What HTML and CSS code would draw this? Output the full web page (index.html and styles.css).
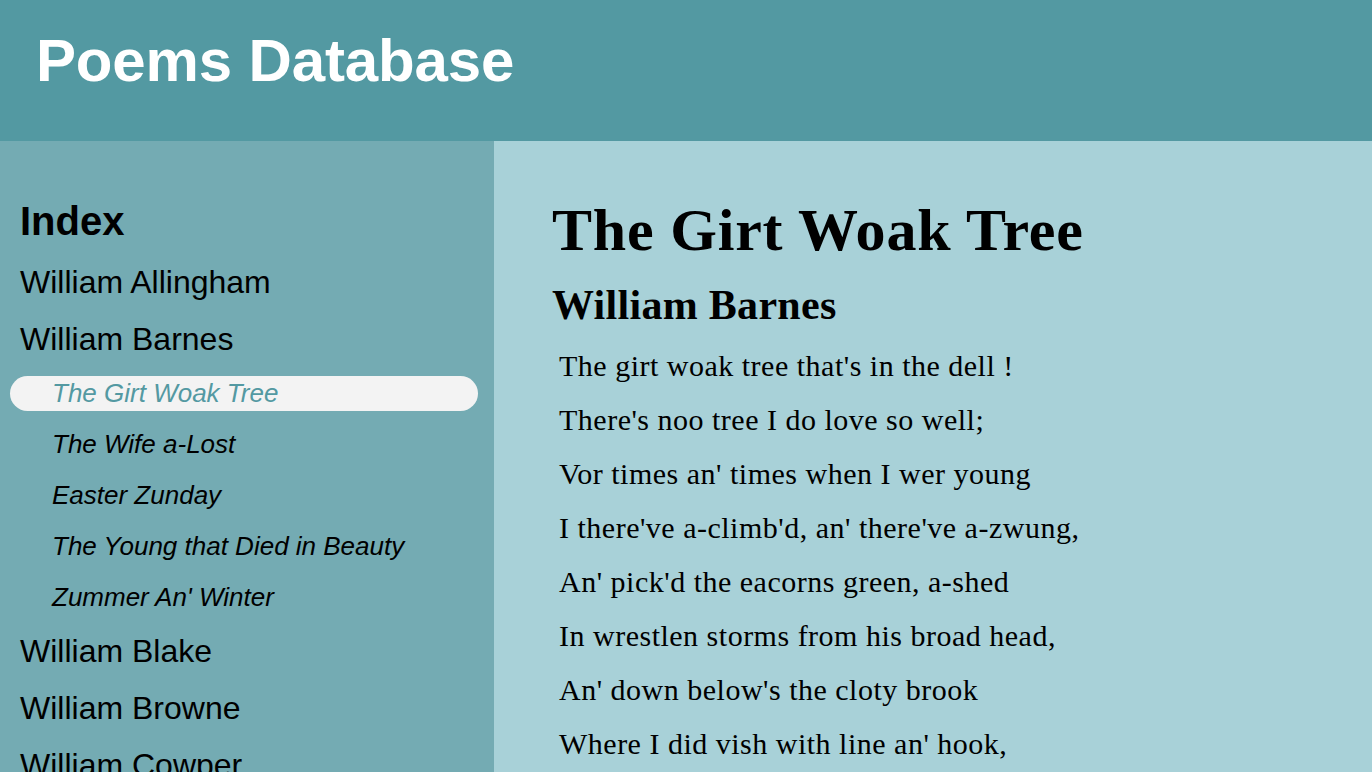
FILE: index.html
```html
<!DOCTYPE html>
<html lang="en">
<head>
<meta charset="utf-8">
<title>Poems Database</title>
<link rel="stylesheet" href="styles.css">
</head>
<body>
<header class="site-header">
  <h1 class="site-title">Poems Database</h1>
</header>
<div class="layout">
  <nav class="sidebar">
    <h2 class="index-title">Index</h2>
    <ul class="authors">
      <li class="author"><a class="author-link" href="#">William Allingham</a></li>
      <li class="author"><a class="author-link" href="#">William Barnes</a>
        <ul class="poems">
          <li class="poem"><a class="poem-link active" href="#">The Girt Woak Tree</a></li>
          <li class="poem"><a class="poem-link" href="#">The Wife a-Lost</a></li>
          <li class="poem"><a class="poem-link" href="#">Easter Zunday</a></li>
          <li class="poem"><a class="poem-link" href="#">The Young that Died in Beauty</a></li>
          <li class="poem"><a class="poem-link" href="#">Zummer An' Winter</a></li>
        </ul>
      </li>
      <li class="author"><a class="author-link" href="#">William Blake</a></li>
      <li class="author"><a class="author-link" href="#">William Browne</a></li>
      <li class="author"><a class="author-link" href="#">William Cowper</a></li>
    </ul>
  </nav>
  <main class="content">
    <h1 class="poem-title">The Girt Woak Tree</h1>
    <h2 class="poem-author">William Barnes</h2>
    <div class="verse">
      <p class="line">The girt woak tree that's in the dell !</p>
      <p class="line">There's noo tree I do love so well;</p>
      <p class="line">Vor times an' times when I wer young</p>
      <p class="line">I there've a-climb'd, an' there've a-zwung,</p>
      <p class="line">An' pick'd the eacorns green, a-shed</p>
      <p class="line">In wrestlen storms from his broad head,</p>
      <p class="line">An' down below's the cloty brook</p>
      <p class="line">Where I did vish with line an' hook,</p>
    </div>
  </main>
</div>
</body>
</html>
```

FILE: styles.css
```css
html, body {
  margin: 0;
  padding: 0;
  height: 100%;
  overflow: hidden;
}

body {
  font-family: "Liberation Sans", Arial, sans-serif;
  color: #000;
  background: #a8d1d8;
}

.site-header {
  box-sizing: border-box;
  height: 141px;
  background: #5399a2;
  padding: 26px 36px 0;
}

.site-title {
  margin: 0;
  font-size: 60px;
  font-weight: bold;
  line-height: 69px;
  letter-spacing: -0.15px;
  color: #fff;
}

.layout {
  display: flex;
  height: calc(100% - 141px);
}

.sidebar {
  box-sizing: border-box;
  width: 494px;
  flex: 0 0 494px;
  background: #74abb3;
  padding: 57px 16px 0 10px;
}

.index-title {
  margin: 0 0 20px 10px;
  font-size: 40px;
  line-height: 46px;
  font-weight: bold;
}

.authors,
.poems {
  list-style: none;
  margin: 0;
  padding: 0;
}

.author-link {
  display: block;
  margin: 0 0 20px 10px;
  font-size: 32px;
  line-height: 37px;
  color: #000;
  text-decoration: none;
}

.poems {
  margin-top: -2px;
  margin-bottom: 18px;
}

.poem + .poem {
  margin-top: 16px;
}

.poem-link {
  display: block;
  padding: 3px 0 3px 42px;
  border-radius: 18px;
  font-size: 26px;
  line-height: 29px;
  font-style: italic;
  color: #000;
  text-decoration: none;
}

.poem-link.active {
  background: #f3f3f3;
  color: #5399a2;
}

.content {
  flex: 1;
  padding: 55px 0 0 58px;
  font-family: "Liberation Serif", "Times New Roman", serif;
}

.poem-title {
  margin: 0;
  font-size: 60px;
  line-height: 69px;
  font-weight: bold;
  letter-spacing: 0.8px;
}

.poem-author {
  margin: 16px 0 0;
  font-size: 42px;
  line-height: 48px;
  font-weight: bold;
  letter-spacing: 0.3px;
}

.verse {
  margin-top: 10px;
  padding-left: 7px;
}

.line {
  margin: 0;
  font-size: 30px;
  line-height: 54px;
  letter-spacing: 0.5px;
}
```
